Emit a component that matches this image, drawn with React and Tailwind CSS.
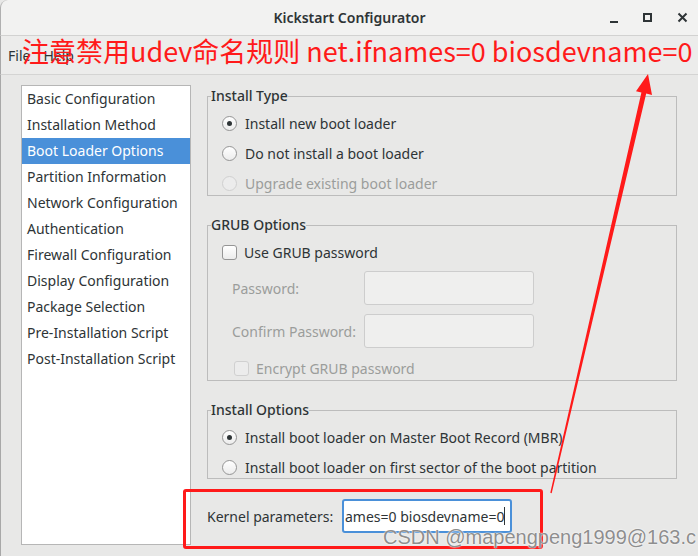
import React from "react";

const items = [
  "Basic Configuration",
  "Installation Method",
  "Boot Loader Options",
  "Partition Information",
  "Network Configuration",
  "Authentication",
  "Firewall Configuration",
  "Display Configuration",
  "Package Selection",
  "Pre-Installation Script",
  "Post-Installation Script",
];

const Radio = ({ checked, disabled, label }) => (
  <div className="flex items-center h-[22px] gap-[8px]">
    <span
      className={`w-[15px] h-[15px] rounded-full border flex items-center justify-center ${
        disabled ? "border-[#d0d0d0] bg-[#ececec]" : "border-[#959595] bg-gradient-to-b from-white to-[#ececec]"
      }`}
    >
      {checked && <span className="w-[5px] h-[5px] rounded-full bg-[#2e3436]" />}
    </span>
    <span className={disabled ? "text-[#9b9d9b]" : "text-[#2e3436]"}>{label}</span>
  </div>
);

const Check = ({ disabled, label }) => (
  <div className="flex items-center h-[22px] gap-[7px]">
    <span
      className={`w-[15px] h-[15px] rounded-[3px] border ${
        disabled ? "border-[#d0d0d0] bg-[#ececec]" : "border-[#959595] bg-gradient-to-b from-white to-[#ececec]"
      }`}
    />
    <span className={disabled ? "text-[#9b9d9b]" : "text-[#2e3436]"}>{label}</span>
  </div>
);

const Frame = ({ title, children }) => (
  <fieldset className="border border-[#bcbcbc] px-[14px] pb-0 m-0">
    <legend className="ml-[-11px] px-0 leading-[20px] font-medium text-[#2e3436]">{title}</legend>
    <div className="flex flex-col pt-[6px]">{children}</div>
  </fieldset>
);

export default function App() {
  return (
    <div
      className="relative w-[698px] h-[556px] overflow-hidden bg-[#e8e8e7] text-[14px] text-[#2e3436]"
      style={{ fontFamily: '"Noto Sans", "Noto Sans CJK SC", sans-serif' }}
    >
      {/* title bar */}
      <div className="h-[36px] grid grid-cols-[1fr_auto_1fr] items-center bg-[#f2f2f1] border-b border-[#d2d2d1] rounded-tl-[8px] border-l border-l-[#b0b0b0]">
        <div />
        <div className="font-semibold text-[#2e3436] text-[14px]">Kickstart Configurator</div>
        <div className="flex justify-end items-center gap-[25px] pr-[10px]">
          <span className="w-[8px] h-[2px] bg-[#2e3436] mt-[8px]" />
          <span className="w-[9px] h-[9px] border-2 border-[#2e3436]" />
          <svg width="11" height="11" viewBox="0 0 11 11">
            <path d="M1.5 1.5 L9.5 9.5 M9.5 1.5 L1.5 9.5" stroke="#2e3436" strokeWidth="2" />
          </svg>
        </div>
      </div>

      {/* menu bar */}
      <div className="h-[39px] flex items-center gap-[13px] px-[7px] bg-[#ececeb] border-b border-[#d4d4d3] border-l border-l-[#a8a8a8]">
        <span>File</span>
        <span>Help</span>
      </div>

      {/* body */}
      <div className="flex gap-[16px] pl-[20px] pt-[10px] h-[481px] border-l border-[#a8a8a8]">
        <div className="w-[170px] h-[460px] bg-white border border-[#b6b6b6] pt-0">
          {items.map((it) => (
            <div
              key={it}
              className={`h-[26px] flex items-center pl-[5px] pb-[1px] ${
                it === "Boot Loader Options" ? "bg-[#4a90d9] text-white" : "text-[#2e3436]"
              }`}
            >
              {it}
            </div>
          ))}
        </div>

        <div className="w-[470px] flex flex-col pt-[1px]">
          <Frame title="Install Type">
            <div className="flex flex-col gap-[8px] pb-[1px]">
              <Radio checked label="Install new boot loader" />
              <Radio label="Do not install a boot loader" />
              <Radio disabled label="Upgrade existing boot loader" />
            </div>
          </Frame>

          <div className="mt-[19px]">
            <Frame title="GRUB Options">
              <Check label="Use GRUB password" />
              <div className="flex items-center mt-[8px] pl-[10px]">
                <span className="w-[132px] text-[#9b9d9b]">Password:</span>
                <span className="w-[170px] h-[34px] rounded-[3px] border border-[#cdcdcd] bg-[#efefee]" />
              </div>
              <div className="flex items-center mt-[9px] pl-[10px]">
                <span className="w-[132px] text-[#9b9d9b]">Confirm Password:</span>
                <span className="w-[170px] h-[34px] rounded-[3px] border border-[#cdcdcd] bg-[#efefee]" />
              </div>
              <div className="mt-[9px] pl-[12px] pb-[1px]">
                <Check disabled label="Encrypt GRUB password" />
              </div>
            </Frame>
          </div>

          <div className="mt-[19px]">
            <Frame title="Install Options">
              <div className="flex flex-col gap-[8px]">
                <Radio checked label="Install boot loader on Master Boot Record (MBR)" />
                <Radio label="Install boot loader on first sector of the boot partition" />
              </div>
            </Frame>
          </div>

          <div className="flex items-center mt-[20px]">
            <span className="w-[135px]">Kernel parameters:</span>
            <div className="w-[170px] h-[34px] rounded-[3px] border-2 border-[#4a90d9] bg-white flex items-center pl-[1px] overflow-hidden">
              <span className="whitespace-nowrap">ames=0 biosdevname=0</span>
              <span className="w-[1px] h-[18px] bg-[#2e3436]" />
            </div>
          </div>
        </div>
      </div>

      {/* annotations */}
      <div className="absolute left-[22px] top-[35px] text-[27px] leading-[32px] text-[#ff1a1a] whitespace-nowrap" style={{ fontFamily: '"Noto Sans CJK SC", sans-serif' }}>
        注意禁用udev命名规则 net.ifnames=0 biosdevname=0
      </div>
      <div className="absolute left-[183px] top-[489px] w-[360px] h-[60px] border-[3px] border-[#ff1a1a] rounded-[3px]" />
      <svg className="absolute left-0 top-0" width="698" height="556" viewBox="0 0 698 556">
        <polygon
          points="550.3,492.8 551.7,493.2 646.2,93.6 652,95 648,74 636,91.2 641.4,92.4"
          fill="#ff1a1a"
        />
      </svg>
      <div
        className="absolute left-[383px] top-[524px] text-[20px] leading-[26px] text-[#8e8e8e] whitespace-nowrap [text-shadow:0_0_2px_#fff,0_0_1px_#fff]"
        style={{ fontFamily: '"Liberation Sans", sans-serif' }}
      >
        CSDN @mapengpeng1999@163.c
      </div>
    </div>
  );
}
